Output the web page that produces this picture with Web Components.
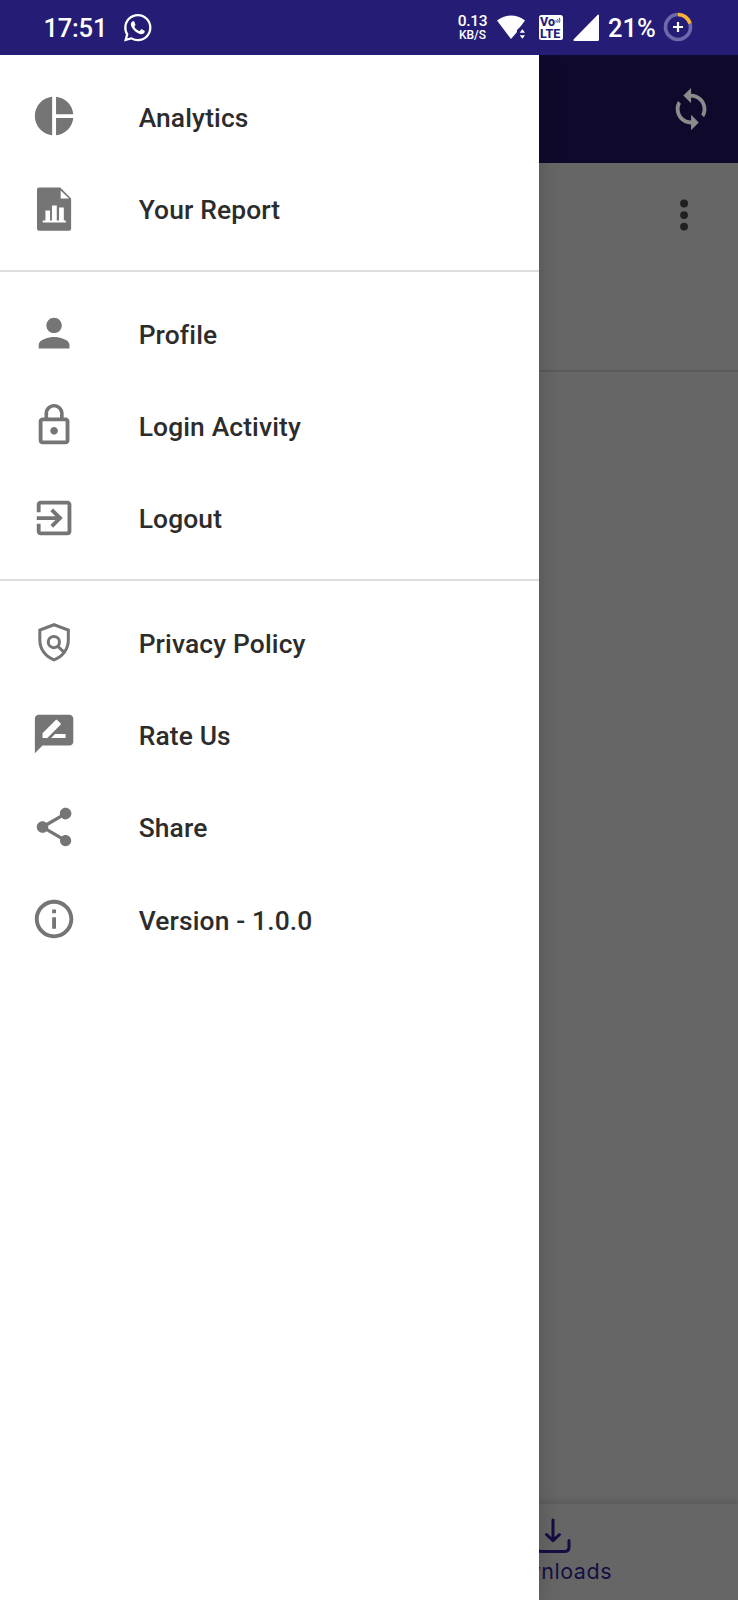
<!DOCTYPE html>
<html lang="en">
<head>
<meta charset="utf-8">
<title>Navigation drawer</title>
<style>
html, body { margin: 0; padding: 0; }
body { width: 738px; height: 1600px; overflow: hidden; font-family: Roboto, "Liberation Sans", sans-serif; background: #666; }
</style>
</head>
<body>
<app-screen>
  <status-bar slot="status"></status-bar>
  <app-page slot="page"></app-page>
  <nav-drawer slot="drawer">
    <nav-group>
      <nav-item icon="pie">Analytics</nav-item>
      <nav-item icon="report">Your Report</nav-item>
    </nav-group>
    <nav-group>
      <nav-item icon="person">Profile</nav-item>
      <nav-item icon="lock">Login Activity</nav-item>
      <nav-item icon="exit">Logout</nav-item>
    </nav-group>
    <nav-group>
      <nav-item icon="policy">Privacy Policy</nav-item>
      <nav-item icon="rate">Rate Us</nav-item>
      <nav-item icon="share">Share</nav-item>
      <nav-item icon="info">Version - 1.0.0</nav-item>
    </nav-group>
  </nav-drawer>
</app-screen>
<script>
const icons = {
  pie: '<path d="M11 2v20c-5.07-.5-9-4.79-9-10s3.93-9.5 9-10zm2.03 0v8.99H22c-.47-4.74-4.24-8.52-8.97-8.99zm0 11.01V22c4.74-.47 8.5-4.25 8.97-8.99h-8.97z"/>',
  report: '<g transform="scale(.5217)"><path fill-rule="evenodd" d="M8 1.5H29.2L40 12.4V42.5a2 2 0 0 1-2 2H8a2 2 0 0 1-2-2V3.500a2 2 0 0 1 2-2zM29.600 4.600V12.500H38zM11.700 34.500V36.500H34.700V34.500H32.700V21.500H28V34.500H25.700V19.500H20.900V34.500H19V24.500H14.400V34.500z"/></g>',
  person: '<path d="M12 12c2.21 0 4-1.79 4-4s-1.79-4-4-4-4 1.79-4 4 1.79 4 4 4zm0 2c-2.67 0-8 1.34-8 4v2h16v-2c0-2.66-5.33-4-8-4z"/>',
  lock: '<path d="M12 17c1.1 0 2-.9 2-2s-.9-2-2-2-2 .9-2 2 .9 2 2 2zm6-9h-1V6c0-2.76-2.24-5-5-5S7 3.24 7 6v2H6c-1.1 0-2 .9-2 2v10c0 1.1.9 2 2 2h12c1.1 0 2-.9 2-2V10c0-1.1-.9-2-2-2zM8.900 6c0-1.710 1.390-3.100 3.100-3.100s3.100 1.390 3.100 3.100v2H8.900V6zM18 20H6V10h12v10z"/>',
  exit: '<path d="M10.09 15.59L11.5 17l5-5-5-5-1.41 1.41L12.67 11H3v2h9.67l-2.58 2.59zM19 3H5c-1.11 0-2 .9-2 2v4h2V5h14v14H5v-4H3v4c0 1.1.89 2 2 2h14c1.1 0 2-.9 2-2V5c0-1.1-.9-2-2-2z"/>',
  policy: '<g transform="scale(.5217)" fill="none" stroke="currentColor" stroke-width="3"><path d="M23 5.700L37.200 11V21C37.200 30 31.500 37.800 23 40.700C14.500 37.800 8.800 30 8.800 21V11Z"/><circle cx="22.800" cy="23" r="5.600"/><path d="M26.500 27L34 34"/></g>',
  rate: '<path d="M20 2H4c-1.1 0-1.990.9-1.990 2L2 22l4-4h14c1.1 0 2-.9 2-2V4c0-1.1-.9-2-2-2zM6 14v-2.470l6.880-6.880c.2-.2.51-.2.71 0l1.770 1.770c.2.2.2.51 0 .71L8.470 14H6zm12 0h-7.500l2-2H18v2z"/>',
  share: '<path d="M18 16.08c-.76 0-1.44.3-1.96.77L8.91 12.7c.05-.23.09-.46.09-.7s-.04-.47-.09-.7l7.05-4.11c.54.5 1.25.81 2.04.81 1.66 0 3-1.34 3-3s-1.34-3-3-3-3 1.34-3 3c0 .24.04.47.09.7L8.04 9.81C7.5 9.31 6.79 9 6 9c-1.66 0-3 1.34-3 3s1.34 3 3 3c.79 0 1.5-.31 2.04-.81l7.12 4.16c-.05.21-.08.43-.08.65 0 1.61 1.31 2.92 2.92 2.92s2.92-1.31 2.92-2.92-1.31-2.920-2.920-2.920z"/>',
  info: '<path d="M11 17h2v-6h-2v6zm1-15C6.48 2 2 6.48 2 12s4.48 10 10 10 10-4.480 10-10S17.520 2 12 2zm0 18c-4.410 0-8-3.590-8-8s3.590-8 8-8 8 3.590 8 8-3.590 8-8 8zM11 9h2V7h-2v2z"/>',
  sync: '<path d="M12 4V1L8 5l4 4V6c3.31 0 6 2.690 6 6 0 1.010-.25 1.970-.7 2.800l1.460 1.460C19.540 15.030 20 13.570 20 12c0-4.420-3.580-8-8-8zm0 14c-3.310 0-6-2.690-6-6 0-1.010.25-1.970.7-2.800L5.240 7.740C4.460 8.970 4 10.430 4 12c0 4.420 3.580 8 8 8v3l4-4-4-4v3z"/>',
  more: '<circle cx="12" cy="6" r="2.050"/><circle cx="12" cy="12" r="2.050"/><circle cx="12" cy="18" r="2.050"/>',
  whatsapp: '<path d="M17.472 14.382c-.297-.149-1.758-.867-2.03-.967-.273-.099-.471-.148-.67.15-.197.297-.767.966-.94 1.164-.173.199-.347.223-.644.075-.297-.15-1.255-.463-2.39-1.475-.883-.788-1.48-1.761-1.653-2.059-.173-.297-.018-.458.13-.606.134-.133.298-.347.446-.52.149-.174.198-.298.298-.497.099-.198.05-.371-.025-.52-.075-.149-.669-1.612-.916-2.207-.242-.579-.487-.5-.669-.51-.173-.008-.371-.01-.57-.01-.198 0-.52.074-.792.372-.272.297-1.04 1.016-1.04 2.479 0 1.462 1.065 2.875 1.213 3.074.149.198 2.096 3.2 5.077 4.487.709.306 1.262.489 1.694.625.712.227 1.36.195 1.871.118.571-.085 1.758-.719 2.006-1.413.248-.694.248-1.289.173-1.413-.074-.124-.272-.198-.57-.347m-5.421 7.403h-.004a9.87 9.87 0 01-5.031-1.378l-.361-.214-3.741.982.998-3.648-.235-.374a9.86 9.86 0 01-1.51-5.26c.001-5.45 4.436-9.884 9.888-9.884 2.64 0 5.122 1.03 6.988 2.898a9.825 9.825 0 012.893 6.994c-.003 5.45-4.437 9.884-9.885 9.884m8.413-18.297A11.815 11.815 0 0012.05 0C5.495 0 .16 5.335.157 11.892c0 2.096.547 4.142 1.588 5.945L.057 24l6.305-1.654a11.882 11.882 0 005.683 1.448h.005c6.554 0 11.89-5.335 11.893-11.893a11.821 11.821 0 00-3.48-8.413z"/>'
};

function define(name, html) {
  const template = document.createElement('template');
  template.innerHTML = html;
  customElements.define(name, class extends HTMLElement {
    constructor() {
      super();
      this.attachShadow({ mode: 'open' }).append(template.content.cloneNode(true));
    }
  });
}

customElements.define('ui-icon', class extends HTMLElement {
  connectedCallback() {
    if (this.shadowRoot) return;
    this.attachShadow({ mode: 'open' }).innerHTML =
      `<style>:host{display:block;flex:none;width:46.150px;height:46.150px}svg{display:block;width:100%;height:100%;fill:currentColor}</style>
       <svg viewBox="0 0 24 24" aria-hidden="true">${icons[this.getAttribute('name')]}</svg>`;
  }
});

customElements.define('nav-item', class extends HTMLElement {
  connectedCallback() {
    if (this.shadowRoot) return;
    this.attachShadow({ mode: 'open' }).innerHTML =
      `<style>
        :host{display:flex;align-items:center;height:92.350px;padding-left:30.900px;gap:61.600px;color:#2c2c2c;font-size:26.400px;font-weight:500;line-height:32px;letter-spacing:.14px;white-space:nowrap}
        ui-icon{color:#757575}
        span{padding-top:3.400px}
      </style>
      <ui-icon name="${this.getAttribute('icon')}"></ui-icon><span><slot></slot></span>`;
  }
});

define('nav-group', `<style>
  :host{display:block;padding-bottom:15px}
  :host(:not(:last-of-type)){border-bottom:2px solid #dedede;margin-bottom:15px}
</style><slot></slot>`);

define('nav-drawer', `<style>
  :host{display:block;box-sizing:border-box;height:100%;width:538.500px;background:#fff;padding-top:15.700px;box-shadow:1px 0 20px rgba(0,0,0,.18)}
</style><slot></slot>`);

define('app-screen', `<style>
  :host{display:flex;flex-direction:column;width:738px;height:1600px;overflow:hidden}
  main{position:relative;flex:1;min-height:0;overflow:hidden}
  .drawer{position:absolute;inset:0 auto 0 0}
</style>
<slot name="status"></slot>
<main><slot name="page"></slot><div class="drawer"><slot name="drawer"></slot></div></main>`);

define('app-page', `<style>
  :host{display:flex;flex-direction:column;height:100%;background:#666}
  header{display:flex;align-items:center;justify-content:flex-end;box-sizing:border-box;height:108.200px;padding:0 23.600px 0 0;background:#0f0a2c;color:#8b8b8b}
  .row{display:flex;justify-content:flex-end;box-sizing:border-box;height:209.300px;padding:29px 31px 0 0;border-bottom:2px solid #5b5b5b;color:#202020}
  .body{flex:1}
  nav{box-sizing:border-box;height:96.500px;padding-left:480px;color:#150e42;box-shadow:0 -2px 7px rgba(0,0,0,.14)}
  .tab{display:flex;flex-direction:column;align-items:center;width:146px;padding-top:11px}
  .tab svg{width:40px;height:40px}
  .tab span{font:400 21.500px/28px Inter,Roboto,sans-serif;letter-spacing:.55px;margin-top:2px}
</style>
<header><ui-icon name="sync"></ui-icon></header>
<div class="row"><ui-icon name="more"></ui-icon></div>
<div class="body"></div>
<nav><div class="tab">
<svg viewBox="0 0 40 40" fill="none" stroke="currentColor" stroke-width="3" stroke-linecap="round" stroke-linejoin="round"><path d="M20 5V25M13.500 19.500L20 25.700L26.500 19.500M4 25.500V32Q4 36.500 8.500 36.500H31.500Q36 36.500 36 32V25.500"/></svg>
<span>Downloads</span></div></nav>`);

define('status-bar', `<style>
  :host{display:flex;align-items:center;flex:none;box-sizing:border-box;height:54.500px;background:#251c75;color:#fff;padding-left:43.500px;font-weight:500;white-space:nowrap}
  .time{width:80.500px;font-size:25.500px;line-height:32px;padding-top:1px;letter-spacing:-.2px}
  ui-icon{width:27.500px;height:27.500px;margin-top:1px}
  .rate{display:flex;flex-direction:column;align-items:center;width:30px;margin-left:306px;padding-top:1px}
  .rate b{font:500 15.500px/15px Roboto;letter-spacing:-.3px}
  .rate i{font:500 12px/12px Roboto}
  .wifi{width:30px;height:26px;margin-left:8.500px}
  .volte{display:flex;flex-direction:column;width:24.500px;height:25.500px;background:#fff;color:#251c75;border-radius:2.500px;margin-left:12.500px;font:800 12.500px/12px Roboto;box-sizing:border-box;padding:1px 0 0 1.500px}
  .volte div{display:flex;height:12px}
  .volte svg{width:6px;height:7px;margin-top:1px}
  .signal{width:26px;height:27px;margin-left:9.500px}
  .pct{font-size:25.500px;line-height:32px;padding-top:1px;margin-left:9.500px;width:54.500px}
  .ring{width:30px;height:30px}
  svg{display:block;flex:none}
</style>
<span class="time">17:51</span><ui-icon name="whatsapp"></ui-icon>
<div class="rate"><b>0.13</b><i>KB/S</i></div>
<svg class="wifi" viewBox="0 0 30 26" fill="#fff"><path d="M1 6.500Q7.500 1.500 15 1.500T29 6.500L24.500 12.500L21 16V18L15 25Z"/><path d="M23.700 18.800L26.400 15.300L29 18.800ZM23.700 21.300H29L26.400 24.800Z"/></svg>
<div class="volte"><div><span>Vo</span><svg viewBox="0 0 7 7" fill="none" stroke="#251c75" stroke-width="1"><path d="M1 3Q2 4.500 1 6M3 2Q4.300 4 3 6M5 .5Q6.500 3.500 5 6"/></svg></div><div>LTE</div></div>
<svg class="signal" viewBox="0 0 26 27" fill="#fff"><path d="M24.500 1Q26 0 26 1.500V25.500Q26 27 24.500 27H1.500Q-.5 27 1 25Z"/></svg>
<span class="pct">21%</span>
<svg class="ring" viewBox="0 0 30 30" fill="none"><circle cx="15" cy="15" r="12.500" stroke="#7068ac" stroke-width="3.600"/><path d="M15 2.500A12.500 12.500 0 0 1 27 11.500" stroke="#f9b233" stroke-width="3.600"/><path d="M15 10V20M10 15H20" stroke="#fff" stroke-width="2.200"/></svg>`);
</script>
</body>
</html>
